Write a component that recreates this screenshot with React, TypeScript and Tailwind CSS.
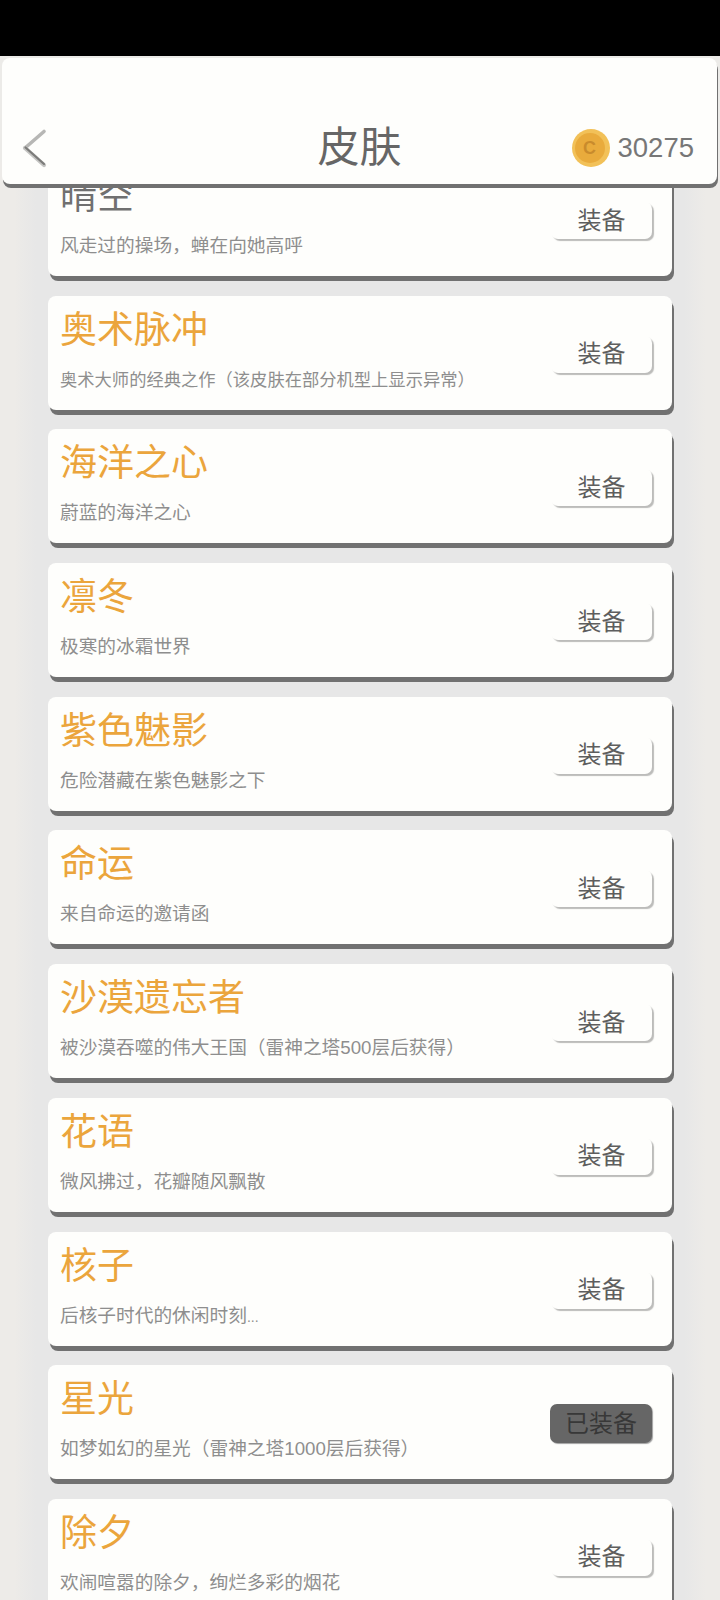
const skins = [
  { name: '晴空', desc: '风走过的操场，蝉在向她高呼', plain: true },
  { name: '奥术脉冲', desc: '奥术大师的经典之作（该皮肤在部分机型上显示异常）', small: true },
  { name: '海洋之心', desc: '蔚蓝的海洋之心' },
  { name: '凛冬', desc: '极寒的冰霜世界' },
  { name: '紫色魅影', desc: '危险潜藏在紫色魅影之下' },
  { name: '命运', desc: '来自命运的邀请函' },
  { name: '沙漠遗忘者', desc: '被沙漠吞噬的伟大王国（雷神之塔500层后获得）' },
  { name: '花语', desc: '微风拂过，花瓣随风飘散' },
  { name: '核子', desc: '后核子时代的休闲时刻', dots: true },
  { name: '星光', desc: '如梦如幻的星光（雷神之塔1000层后获得）', equipped: true },
  { name: '除夕', desc: '欢闹喧嚣的除夕，绚烂多彩的烟花' },
];

function BackIcon() {
  return (
    <svg width="28" height="40" viewBox="0 0 28 40" fill="none" className="-ml-[5px]">
      <path d="M24 3.5 L5 20" stroke="#b7b7b5" strokeWidth="3.6" strokeLinecap="round" />
      <path d="M5 20 L24 37" stroke="#c4c4c2" strokeWidth="4.2" strokeLinecap="round" />
      <path d="M5.5 19.5 L24 36" stroke="#7c7c7a" strokeWidth="2.2" strokeLinecap="round" />
    </svg>
  );
}

function Coin() {
  return (
    <div className="flex h-[38px] w-[38px] items-center rounded-full bg-[#f2c158] pl-[3px]">
      <div className="flex h-[30px] w-[30px] items-center justify-center rounded-full bg-[#e9ab3c] text-[18px] font-bold leading-none text-[#c98b2c]">
        C
      </div>
    </div>
  );
}

function SkinCard({
  name,
  desc,
  plain,
  small,
  dots,
  equipped,
}: {
  name: string;
  desc: string;
  plain?: boolean;
  small?: boolean;
  dots?: boolean;
  equipped?: boolean;
}) {
  return (
    <div className="flex h-[114px] w-[624px] shrink-0 items-center justify-between rounded-[8px] bg-[#fefefc] pl-3 pr-5 shadow-[2px_5px_0_#717171]">
      <div className="min-w-0 self-start pt-[10px]">
        <div className={`text-[37px] leading-[50px] ${plain ? 'text-[#707070]' : 'text-[#eba53c]'}`}>{name}</div>
        <div className={`mt-[11px] leading-[26px] text-[#8e8e8e] ${small ? 'text-[17.3px]' : 'text-[18.7px]'}`}>
          {desc}
          {dots && <span className="text-[14px]">...</span>}
        </div>
      </div>
      {equipped ? (
        <div className="mt-[3px] flex h-[39px] w-[102px] shrink-0 items-center justify-center rounded-[7px] bg-[#666666] text-[24px] text-[#383838] shadow-[1px_1px_1px_#a0a0a0]">
          已装备
        </div>
      ) : (
        <div className="mt-[3px] flex h-[37px] w-[101px] shrink-0 items-center justify-center rounded-[7px] bg-[#fefefc] text-[24px] text-[#5e5e5e] shadow-[2px_2px_1px_#bcbcba]">
          装备
        </div>
      )}
    </div>
  );
}

export default function App() {
  return (
    <div className="flex h-[1600px] w-[720px] flex-col overflow-hidden bg-[#ecebe8] font-['Liberation_Sans','Noto_Sans_CJK_SC',sans-serif]">
      <div className="h-[56px] shrink-0 bg-black" />
      <header className="relative z-10 ml-[2px] mr-[3px] mt-[2px] grid h-[126px] shrink-0 grid-cols-[1fr_auto_1fr] items-center rounded-[8px] bg-[#fefefc] pl-[23px] pr-[23px] pt-[54px] shadow-[1px_4px_0_#717171]">
        <BackIcon />
        <h1 className="text-[42px] font-normal leading-[56px] text-[#666666]">皮肤</h1>
        <div className="flex items-center justify-self-end gap-[8px]">
          <Coin />
          <span className="text-[27.5px] leading-[38px] text-[#777777]">30275</span>
        </div>
      </header>
      <main className="-mt-[22px] flex flex-col items-center gap-[19.7px] bg-[linear-gradient(90deg,#edebe8_2%,#e7e7e7_5%,#e7e7e7_95%,#edebe8_98%)]">
        {skins.map((s) => (
          <SkinCard key={s.name} {...s} />
        ))}
      </main>
    </div>
  );
}
